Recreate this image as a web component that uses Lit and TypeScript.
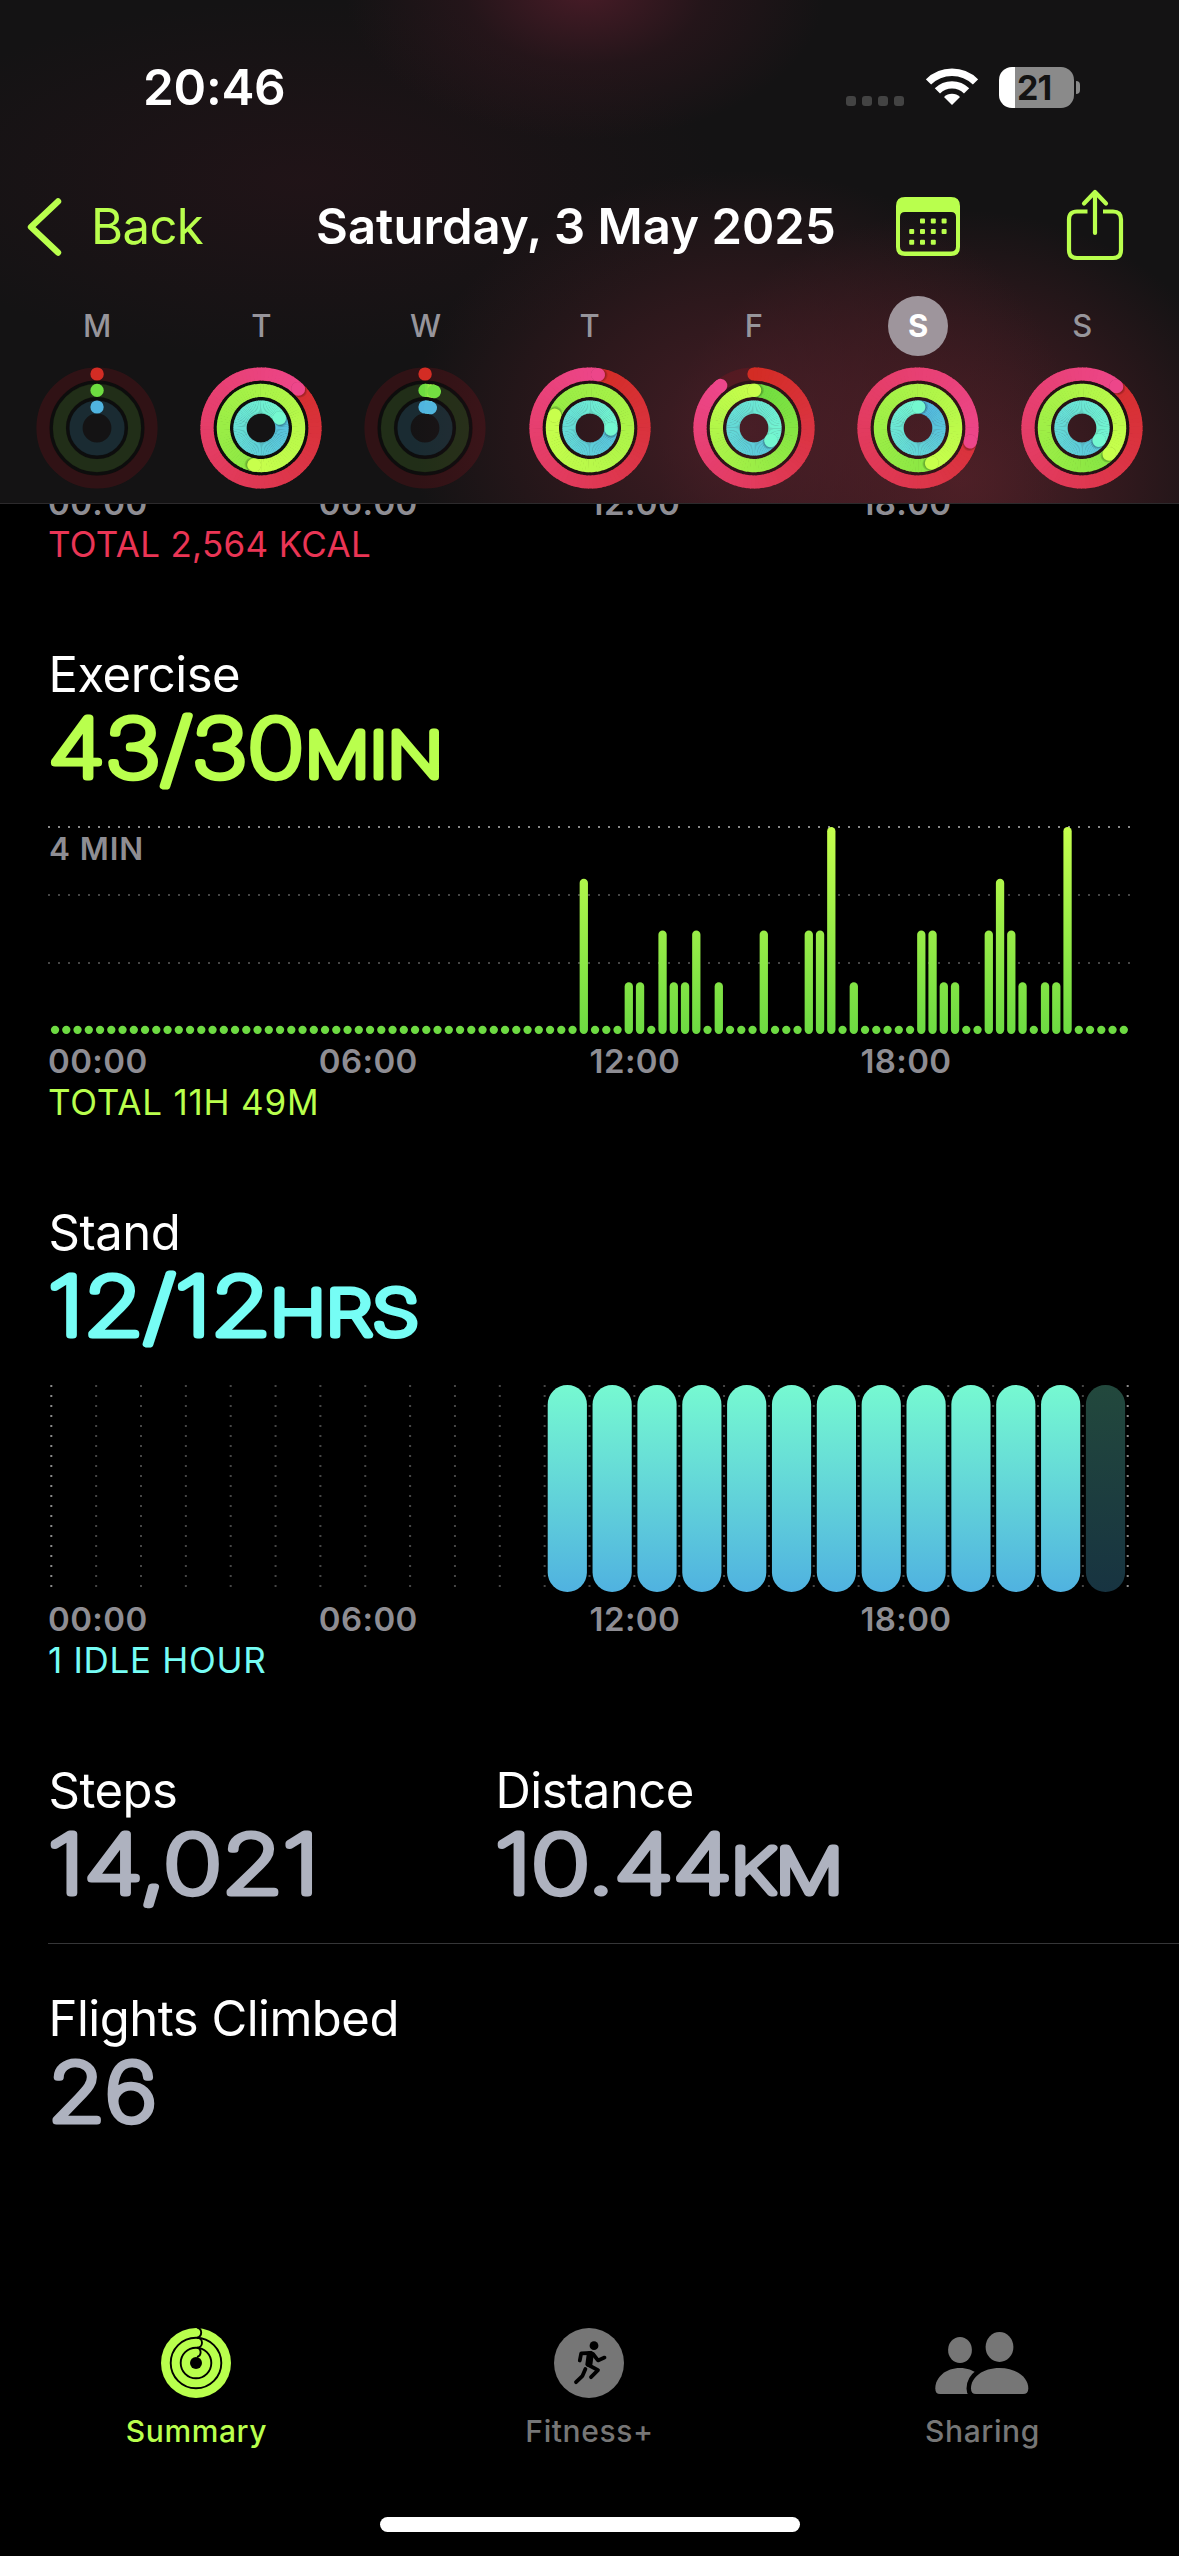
import { LitElement, html, svg, css } from "lit";
import { customElement, property } from "lit/decorators.js";

type RGB = [number, number, number];
interface Day {
  letter: string;
  selected?: boolean;
  /** Degrees swept by the move, exercise and stand rings; above 360 means a second lap. */
  sweep: [number, number, number];
}

const DAYS: Day[] = [
  { letter: "M", sweep: [0, 0, 0] },
  { letter: "T", sweep: [404, 551, 422] },
  { letter: "W", sweep: [0, 14.5, 15] },
  { letter: "T", sweep: [369, 650, 453] },
  { letter: "F", sweep: [322, 361, 487] },
  { letter: "S", selected: true, sweep: [465, 519, 362] },
  { letter: "S", sweep: [400, 494, 486] },
];

const RINGS: { r: number; from: RGB; to: RGB; track: string }[] = [
  { r: 54, from: [211, 44, 36], to: [237, 70, 138], track: "rgba(200,20,30,.16)" },
  { r: 37.6, from: [110, 220, 64], to: [200, 255, 76], track: "rgba(110,200,50,.15)" },
  { r: 21, from: [80, 180, 224], to: [116, 248, 208], track: "rgba(60,180,220,.15)" },
];

/** Exercise minutes per quarter of an hour, keyed by slot 0-95. */
const MINUTES: Record<number, number> = {
  47: 3, 51: 1, 52: 1, 54: 2, 55: 1, 56: 1, 57: 2, 59: 1, 63: 2, 67: 2, 68: 2, 69: 4,
  71: 1, 77: 2, 78: 2, 79: 1, 80: 1, 83: 2, 84: 3, 85: 2, 86: 1, 88: 1, 89: 1, 90: 4,
};

const HOURS = ["00:00", "06:00", "12:00", "18:00"];

@customElement("activity-rings")
class ActivityRings extends LitElement {
  @property({ attribute: false }) sweep: [number, number, number] = [0, 0, 0];

  static styles = css`
    :host { display: block; width: 122px; height: 122px; }
    .rings { display: block; }
  `;

  private point(r: number, deg: number) {
    const a = (deg * Math.PI) / 180;
    return `${(r * Math.sin(a)).toFixed(2)} ${(-r * Math.cos(a)).toFixed(2)}`;
  }

  private arc(r: number, a: number, b: number, color: string, round = false) {
    return svg`<path d="M${this.point(r, a)}A${r} ${r} 0 0 1 ${this.point(r, b)}" fill="none"
      stroke=${color} stroke-width="13.2" stroke-linecap=${round ? "round" : "butt"} />`;
  }

  private ring(index: number) {
    const { r, from, to, track } = RINGS[index];
    const total = this.sweep[index];
    const mix = (t: number) =>
      `rgb(${from.map((v, i) => Math.round(v + (to[i] - v) * t)).join(",")})`;
    const start = Math.max(0, total - 360);
    const steps = Math.max(1, Math.ceil((total - start) / 4));
    const size = (total - start) / steps;
    const parts = [svg`<circle r=${r} fill="none" stroke=${track} stroke-width="13.2" />`];
    if (total < 360) parts.push(this.arc(r, 0, 0.2, mix(0), true));
    for (let i = 0; i < steps && total > 0; i++) {
      const a = start + i * size;
      parts.push(this.arc(r, a, a + size + (i < steps - 1 ? 0.8 : 0), mix((a + size / 2) / total)));
    }
    if (total >= 360) {
      parts.push(this.arc(r, total - 1, total + 150 / r, "rgba(0,0,0,.12)", true));
      parts.push(this.arc(r, total - 1, total + 80 / r, "rgba(0,0,0,.14)", true));
    }
    if (total > 0) parts.push(this.arc(r, total - 1, total, mix(total < 40 ? 0.05 : 1), true));
    return parts;
  }

  render() {
    return html`<svg class="rings" width="122" height="122" viewBox="-61 -61 122 122">
      <g fill="none" stroke="#000" stroke-opacity=".3" stroke-width="4">
        <circle r="45.8" /><circle r="29.3" />
      </g>
      ${[0, 1, 2].map((i) => this.ring(i))}
    </svg>`;
  }
}

@customElement("metric-value")
class MetricValue extends LitElement {
  @property() amount = "";
  @property() unit = "";
  @property({ type: Number }) amountWidth = 0;
  @property({ type: Number }) unitX = 0;
  @property({ type: Number }) unitWidth = 0;

  static styles = css`
    :host { display: block; height: 124px; }
    .value {
      display: block; overflow: visible; fill: currentColor; stroke: currentColor;
      stroke-linejoin: round; stroke-linecap: round;
      font-family: Inter, "Liberation Sans", sans-serif;
    }
    .amount { font-size: 80.5px; font-weight: 100; stroke-width: 7px; }
    .unit { font-size: 62px; font-weight: 100; stroke-width: 7px; }
  `;

  render() {
    return html`<svg class="value" width="480" height="124">
      <text class="amount" x="0" y="74.5" textLength=${this.amountWidth} lengthAdjust="spacingAndGlyphs">${this.amount}</text>
      ${this.unit
        ? svg`<text class="unit" x=${this.unitX} y="74.5" textLength=${this.unitWidth} lengthAdjust="spacingAndGlyphs">${this.unit}</text>`
        : ""}
    </svg>`;
  }
}

@customElement("app-root")
class AppRoot extends LitElement {
  static styles = css`
    :host {
      display: flex; flex-direction: column; width: 1179px; height: 2556px; overflow: hidden;
      background: #000; color: #fff; font-family: Inter, "Liberation Sans", sans-serif;
    }
    svg { display: block; }
    .header {
      box-sizing: border-box; flex: none; height: 504px; border-bottom: 1px solid #2c2a2c;
      background:
        radial-gradient(ellipse 240px 150px at 585px -10px, rgba(74,28,40,.95), rgba(60,24,34,.4) 50%, transparent),
        radial-gradient(ellipse 420px 180px at 300px 180px, rgba(50,20,28,.4), transparent),
        radial-gradient(ellipse 330px 260px at 740px 430px, rgba(84,33,43,.75), rgba(76,30,38,.45) 50%, transparent),
        radial-gradient(ellipse 300px 270px at 960px 480px, rgba(88,34,42,.85), rgba(76,30,38,.5) 55%, transparent),
        #141314;
    }
    .status { display: flex; align-items: center; height: 174px; padding: 0 101px 0 143px; }
    .time { flex: 1; font-size: 49.5px; font-weight: 600; line-height: 60px; letter-spacing: -0.3px; }
    .signal { display: flex; gap: 6px; margin: 28px 21.5px 0 0; }
    .signal-dot { width: 10px; height: 10px; border-radius: 3px; background: #434343; }
    .wifi { margin-right: 21.5px; }
    .battery {
      display: flex; align-items: center; width: 75px; height: 41px; border-radius: 13px;
      background: linear-gradient(90deg, #fff 16px, #8a8a8a 16px);
      color: #131313; font-size: 34px; font-weight: 700; line-height: 41px;
    }
    .charge { padding-left: 18px; letter-spacing: -1px; }
    .battery-tip { width: 4px; height: 13px; margin-left: 2px; border-radius: 0 5px 5px 0; background: #8a8a8a; margin-right: -2px; }
    .nav { display: flex; align-items: center; height: 105px; padding: 0 55px 0 26px; }
    .back { display: flex; align-items: center; gap: 27px; width: 290px; color: #b9ff4d; font-size: 49px; line-height: 60px; letter-spacing: -0.6px; }
    .title { flex: 1; font-size: 49px; font-weight: 600; line-height: 60px; letter-spacing: 0.05px; white-space: nowrap; }
    .calendar { margin-right: 106px; }
    .share { margin-top: -3px; }
    .week { display: grid; grid-template-columns: repeat(7, 164.2px); padding: 17px 0 0 15px; }
    .day { display: flex; flex-direction: column; align-items: center; gap: 11px; }
    .letter {
      width: 60px; height: 60px; border-radius: 50%; text-align: center;
      font-size: 31px; font-weight: 500; line-height: 60px; color: #97959b;
    }
    .letter.selected { background: #9e959c; color: #fff; font-weight: 700; }

    .content { flex: 1; overflow: hidden; padding-left: 48px; }
    .axis {
      display: grid; grid-template-columns: repeat(4, 270.8px); height: 40px;
      color: #8e8d93; font-size: 33px; font-weight: 600; line-height: 40px; letter-spacing: 0.4px;
    }
    .axis.clipped { margin-top: -21px; }
    .total { height: 42px; font-size: 35px; line-height: 42px; }
    .total.move { letter-spacing: 0.3px; }
    .total.exercise { letter-spacing: 0.8px; }
    .total.stand { letter-spacing: 0.7px; }
    .block { padding-top: 82px; }
    .name { height: 55px; font-size: 49px; line-height: 55px; letter-spacing: -0.5px; padding-left: 0.5px; white-space: nowrap; }
    .move { color: #ea3555; }
    .exercise { color: #b9ff4d; }
    .stand { color: #76fdf5; }
    .plain { color: #aeb2bf; }
    .chart { overflow: visible; }
    .chart-max { fill: #8e8d93; font-size: 31.5px; font-weight: 600; letter-spacing: 0.9px; }
    .pair { display: grid; grid-template-columns: 447px 1fr; height: 263px; box-sizing: border-box; border-bottom: 1px solid #363638; }
    .flights { padding-top: 47px; }

    .tabs { flex: none; display: grid; grid-template-columns: repeat(3, 1fr); }
    .tab { display: flex; flex-direction: column; align-items: center; gap: 15px; color: #767676; font-size: 30px; font-weight: 500; line-height: 36px; letter-spacing: 0.6px; }
    .tab-icon { margin-right: 2px; }
    .tab.active { color: #b9ff4d; }
    .home { flex: none; align-self: center; width: 420px; height: 15px; margin: 68px 0 24px; border-radius: 8px; background: #fff; }
  `;

  private status() {
    return html`<div class="status">
      <div class="time">20:46</div>
      <div class="signal">${[0, 1, 2, 3].map(() => html`<span class="signal-dot"></span>`)}</div>
      <svg class="wifi" width="52" height="40" viewBox="-26 -38.5 52 40">
        <path d="M-23.5 -23.5A33.3 33.3 0 0 1 23.5 -23.5M-14.6 -14.6A20.6 20.6 0 0 1 14.6 -14.6" fill="none" stroke="#fff" stroke-width="7.4" />
        <path d="M0 -0.5L-8 -8.4A11.5 11.5 0 0 1 8 -8.4Z" fill="#fff" />
      </svg>
      <div class="battery"><span class="charge">21</span></div>
      <span class="battery-tip"></span>
    </div>`;
  }

  private nav() {
    return html`<div class="nav">
      <div class="back">
        <svg width="38" height="60" viewBox="0 0 38 60" fill="none" stroke="#b9ff4d" stroke-width="6.4" stroke-linecap="round" stroke-linejoin="round">
          <path d="M32 4.5L5 30L32 55.5" />
        </svg>
        Back
      </div>
      <div class="title">Saturday, 3 May 2025</div>
      <svg class="calendar" width="64" height="60" viewBox="0 0 64 60" fill="#b9ff4d">
        <path fill-rule="evenodd" d="M9 0H55Q64 0 64 9V50Q64 59 55 59H9Q0 59 0 50V9Q0 0 9 0ZM9 15Q4 15 4 20V49.5Q4 54.5 9 54.5H55Q60 54.5 60 49.5V20Q60 15 55 15Z" />
        ${[[1, 2, 3], [0, 1, 2, 3], [0, 1, 2]].map((cols, row) =>
          cols.map((c) => svg`<rect x=${13.2 + c * 10.8} y=${21.5 + row * 10.6} width="5" height="5" rx="1" />`))}
      </svg>
      <svg class="share" width="58" height="72" viewBox="0 0 58 72" fill="none" stroke="#b9ff4d" stroke-width="4.2" stroke-linecap="round" stroke-linejoin="round">
        <path stroke-linecap="butt" d="M21.5 22.5H11Q3 22.5 3 30.5V61Q3 69 11 69H47Q55 69 55 61V30.5Q55 22.5 47 22.5H37" />
        <path d="M29 3V44M18 14.5L29 3L40 14.5" />
      </svg>
    </div>`;
  }

  private exerciseChart() {
    const dots = (y: number, color: string) =>
      svg`<path d="M0 ${y}H1083" stroke=${color} stroke-width="2" stroke-dasharray="2 8" />`;
    return html`<svg class="chart" width="1083" height="215">
      <defs>
        <linearGradient id="lime" gradientUnits="userSpaceOnUse" x1="0" y1="208" x2="0" y2="1">
          <stop offset="0" stop-color="#6cda42" /><stop offset="1" stop-color="#c6ff4d" />
        </linearGradient>
      </defs>
      ${dots(1, "#8a8a8a")}${dots(69, "#464646")}${dots(137, "#464646")}
      <text class="chart-max" x="1" y="34">4 MIN</text>
      ${Array.from({ length: 96 }, (_, i) => {
        const h = MINUTES[i] ? MINUTES[i] * 51.75 : 8.3;
        return svg`<rect x=${2.9 + i * 11.25} y=${208 - h} width="8.3" height=${h} rx="4.15" fill="url(#lime)" />`;
      })}
    </svg>`;
  }

  private standChart() {
    return html`<svg class="chart" width="1083" height="215">
      <defs>
        <linearGradient id="aqua" gradientUnits="userSpaceOnUse" x1="0" y1="1" x2="0" y2="208">
          <stop offset="0" stop-color="#76f9d1" /><stop offset="1" stop-color="#50b2e0" />
        </linearGradient>
      </defs>
      ${Array.from({ length: 25 }, (_, i) => svg`<path d="M${3.3 + i * 44.85} 1V204" stroke-width="2"
        stroke=${i % 24 ? "#464646" : "#8a8a8a"} stroke-dasharray="2 8" />`)}
      ${Array.from({ length: 13 }, (_, i) => svg`<rect x=${499.7 + i * 44.85} y="1" width="39.2" height="207" rx="19.6"
        fill="url(#aqua)" opacity=${i === 12 ? 0.29 : 1} />`)}
    </svg>`;
  }

  private axis(extra = "") {
    return html`<div class="axis ${extra}">${HOURS.map((h) => html`<span>${h}</span>`)}</div>`;
  }

  private tabs() {
    return html`<div class="tabs">
      <div class="tab active">
        <svg class="tab-icon" width="70" height="70" viewBox="-35 -35 70 70">
          <circle r="35" fill="#b9ff4d" /><circle r="6" />
          <g fill="none" stroke="#000" stroke-width="1.9">
            <circle r="25.3" /><circle r="15.3" />
            <path d="M1 -35.5A5.2 5.2 0 0 1 1 -25.3A5 5 0 0 1 1 -15.3A4.8 4.8 0 0 1 1 -6" />
          </g>
        </svg>
        Summary
      </div>
      <div class="tab">
        <svg class="tab-icon" width="70" height="70" viewBox="-35 -35 70 70">
          <circle r="35" fill="#767676" />
          <circle cx="5" cy="-17.3" r="4.4" />
          <g fill="none" stroke="#000" stroke-width="3.8" stroke-linecap="round" stroke-linejoin="round">
            <path d="M2 -10L-7.8 -9.6L-9.2 -2.5M4 -9L9 -2.6L15.5 -5.4" />
            <path d="M1.2 -8.5L0 0.5" stroke-width="7" />
            <path d="M-1.5 1.5L9 7.2L2 14.2M-3.6 6L-6.5 12.8L-13 19.2" />
          </g>
        </svg>
        Fitness+
      </div>
      <div class="tab">
        <svg class="tab-icon" width="94" height="70" viewBox="0 0 94 70" fill="#767676">
          <ellipse cx="25" cy="22" rx="11.9" ry="13" /><ellipse cx="64.5" cy="19" rx="13.9" ry="15" />
          <path d="M5 66Q0.3 66 0.3 60.5C0.3 49 11 40 25 40S49.7 49 49.7 60.5Q49.7 66 45 66Z" />
          <path d="M41 66Q36 66 36 60.5C36 49 48 40 64.5 40S93.3 49 93.3 60.5Q93.3 66 88 66Z" stroke="#000" stroke-width="9" />
          <path d="M41 66Q36 66 36 60.5C36 49 48 40 64.5 40S93.3 49 93.3 60.5Q93.3 66 88 66Z" />
        </svg>
        Sharing
      </div>
    </div>`;
  }

  render() {
    return html`
      <div class="header">
        ${this.status()} ${this.nav()}
        <div class="week">
          ${DAYS.map((d) => html`<div class="day">
            <div class="letter ${d.selected ? "selected" : ""}">${d.letter}</div>
            <activity-rings .sweep=${d.sweep}></activity-rings>
          </div>`)}
        </div>
      </div>
      <div class="content">
        ${this.axis("clipped")}
        <div class="total move">TOTAL 2,564 KCAL</div>
        <div class="block">
          <div class="name">Exercise</div>
          <metric-value class="exercise" amount="43/30" .amountWidth=${256} unit="MIN" .unitX=${257} .unitWidth=${138}></metric-value>
          ${this.exerciseChart()} ${this.axis()}
          <div class="total exercise">TOTAL 11H 49M</div>
        </div>
        <div class="block">
          <div class="name">Stand</div>
          <metric-value class="stand" amount="12/12" .amountWidth=${223} unit="HRS" .unitX=${222} .unitWidth=${149}></metric-value>
          ${this.standChart()} ${this.axis()}
          <div class="total stand">1 IDLE HOUR</div>
        </div>
        <div class="block pair">
          <div>
            <div class="name">Steps</div>
            <metric-value class="plain" amount="14,021" .amountWidth=${271}></metric-value>
          </div>
          <div>
            <div class="name">Distance</div>
            <metric-value class="plain" amount="10.44" .amountWidth=${237} unit="KM" .unitX=${236} .unitWidth=${112}></metric-value>
          </div>
        </div>
        <div class="flights">
          <div class="name">Flights Climbed</div>
          <metric-value class="plain" amount="26" .amountWidth=${109}></metric-value>
        </div>
      </div>
      ${this.tabs()}
      <div class="home"></div>
    `;
  }
}
